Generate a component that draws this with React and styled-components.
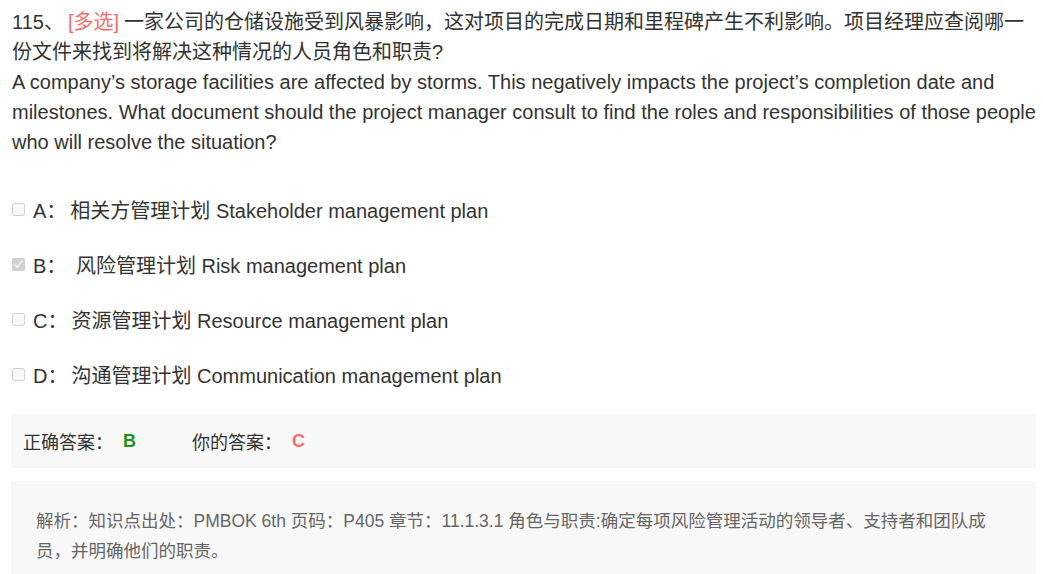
import React from 'react'
import styled, { createGlobalStyle } from 'styled-components';

const GlobalStyle = createGlobalStyle`
  body {
    margin: 0;
    background: #fff;
    font-family: "Liberation Sans", Arial, "Noto Sans CJK SC", sans-serif;
    color: #333;
  }
`;

const Page = styled.div`
  padding: 7px 7px 0 11px;
`;

const Question = styled.div`
  font-size: 20px;
  line-height: 30px;
  padding-left: 1px;
`;

const Tag = styled.span`
  color: #f56c6c;
  margin: 0 5px 0 4px;
`;

const Options = styled.div`
  margin-top: 25px;
  display: flex;
  flex-direction: column;
`;

const Option = styled.label`
  display: flex;
  align-items: center;
  height: 55px;
  font-size: 20px;
  color: #333;
`;

const Check = styled.input.attrs({ type: 'checkbox', disabled: true })`
  width: 13px;
  height: 13px;
  margin: 0 8px 0 1px;
`;

const Letter = styled.span`
  margin-right: 4px;
  white-space: pre;
`;

const AnswerBox = styled.div`
  margin-top: 12px;
  height: 54px;
  background: #f8f8f8;
  display: flex;
  align-items: center;
  padding-left: 12px;
  font-size: 18px;
  color: #333;
`;

const AnswerItem = styled.div`
  display: flex;
  align-items: center;
  & + & {
    margin-left: 56px;
  }
`;

const Mark = styled.span`
  margin-left: 10px;
  font-weight: bold;
  color: ${p => (p.$ok ? '#1b931b' : '#f56c6c')};
`;

const Analysis = styled.div`
  margin-top: 13px;
  background: #f8f8f8;
  padding: 25px 40px 30px 25px;
  font-size: 17.5px;
  line-height: 30px;
  color: #666;
`;

const options = [
  { key: 'A', label: 'A：', text: '相关方管理计划 Stakeholder management plan', checked: false },
  { key: 'B', label: 'B： ', text: '风险管理计划 Risk management plan', checked: true },
  { key: 'C', label: 'C：', text: '资源管理计划 Resource management plan', checked: false },
  { key: 'D', label: 'D：', text: '沟通管理计划 Communication management plan', checked: false },
];

export default function App() {
  return (
    <Page>
      <GlobalStyle />
      <Question>
        115、<Tag>[多选]</Tag>一家公司的仓储设施受到风暴影响，这对项目的完成日期和里程碑产生不利影响。项目经理应查阅哪一份文件来找到将解决这种情况的人员角色和职责?
        <br />
        A company’s storage facilities are affected by storms. This negatively impacts the project’s completion date and milestones. What document should the project manager consult to find the roles and responsibilities of those people who will resolve the situation?
      </Question>
      <Options>
        {options.map(o => (
          <Option key={o.key}>
            <Check defaultChecked={o.checked} />
            <Letter>{o.label}</Letter>
            {o.text}
          </Option>
        ))}
      </Options>
      <AnswerBox>
        <AnswerItem>正确答案：<Mark $ok>B</Mark></AnswerItem>
        <AnswerItem>你的答案：<Mark>C</Mark></AnswerItem>
      </AnswerBox>
      <Analysis>
        解析：知识点出处：PMBOK 6th 页码：P405 章节：11.1.3.1 角色与职责:确定每项风险管理活动的领导者、支持者和团队成员，并明确他们的职责。
      </Analysis>
    </Page>
  )
}
